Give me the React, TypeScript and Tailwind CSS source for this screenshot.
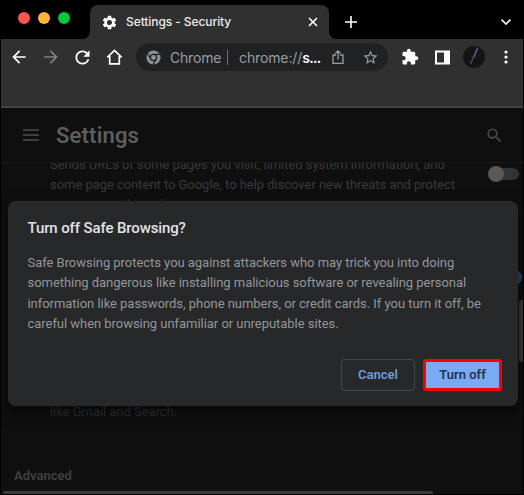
import type { ReactNode } from "react";
import { clsx } from "clsx";

const BODY_LINES = [
  "Safe Browsing protects you against attackers who may trick you into doing",
  "something dangerous like installing malicious software or revealing personal",
  "information like passwords, phone numbers, or credit cards. If you turn it off, be",
  "careful when browsing unfamiliar or unreputable sites.",
];

export default function App() {
  return (
    <div className="relative flex h-[495px] w-[524px] flex-col overflow-hidden bg-black px-px pb-px font-['Roboto',sans-serif]">
      <TabStrip />
      <Toolbar />
      <SettingsPage />
      <SafeBrowsingDialog />
    </div>
  );
}

function Icon({ d, className }: { d: string; className?: string }) {
  return (
    <svg viewBox="0 0 24 24" fill="currentColor" className={clsx("shrink-0", className)}>
      <path d={d} />
    </svg>
  );
}

function TabStrip() {
  return (
    <div className="flex h-[39px] shrink-0 items-end">
      <div className="flex h-full w-[82px] shrink-0 items-center gap-2 pl-[17px]">
        <span className="mb-[3px] h-3 w-3 rounded-full bg-[#ff5550]" />
        <span className="mb-[3px] h-3 w-3 rounded-full bg-[#ffb338]" />
        <span className="mb-[3px] h-3 w-3 rounded-full bg-[#00c838]" />
      </div>
      <TabFoot className="w-[7px]" d="M8 0v8H0a8 8 0 0 0 8-8z" />
      <div className="flex h-[34px] w-[239px] shrink-0 items-center rounded-t-[8px] bg-[#303030] pl-[11px] pr-[10px] text-white">
        <Icon
          className="h-[17px] w-[17px]"
          d="M19.14 12.94c.04-.3.06-.61.06-.94 0-.32-.02-.64-.07-.94l2.03-1.58a.49.49 0 0 0 .12-.61l-1.92-3.32a.49.49 0 0 0-.59-.22l-2.39.96c-.5-.38-1.03-.7-1.62-.94l-.36-2.54a.48.48 0 0 0-.48-.41h-3.84c-.24 0-.43.17-.47.41l-.36 2.54c-.59.24-1.13.57-1.62.94l-2.39-.96a.48.48 0 0 0-.59.22L2.74 8.87a.47.47 0 0 0 .12.61l2.03 1.58c-.05.3-.09.63-.09.94s.02.64.07.94l-2.03 1.58a.49.49 0 0 0-.12.61l1.92 3.32c.12.22.37.29.59.22l2.39-.96c.5.38 1.03.7 1.62.94l.36 2.54c.05.24.24.41.48.41h3.84c.24 0 .44-.17.47-.41l.36-2.54c.59-.24 1.13-.56 1.62-.94l2.39.96c.22.08.47 0 .59-.22l1.92-3.32a.47.47 0 0 0-.12-.61l-2.01-1.58zM12 15.6A3.61 3.61 0 0 1 8.400 12c0-1.980 1.620-3.600 3.600-3.600s3.600 1.620 3.600 3.600-1.620 3.600-3.600 3.600z"
        />
        <span className="ml-[8px] flex-1 whitespace-nowrap font-['Inter',sans-serif] text-[12px] font-medium tracking-[-0.08px] text-[#ececec]">
          Settings - Security
        </span>
        <Icon
          className="h-3 w-3"
          d="M21 5.200 18.800 3 12 9.800 5.200 3 3 5.200 9.800 12 3 18.800 5.200 21 12 14.200 18.800 21 21 18.800 14.200 12z"
        />
      </div>
      <TabFoot className="w-[7px]" d="M0 0v8h8a8 8 0 0 1-8-8z" />
      <div className="flex h-[34px] flex-1 items-center justify-between pl-[9px] pr-[12px] text-white">
        <svg viewBox="0 0 12 12" className="h-3 w-3" stroke="currentColor" strokeWidth="1.6">
          <path d="M6 0v12M0 6h12" />
        </svg>
        <svg viewBox="0 0 10 6" className="h-1.5 w-2.5" fill="none" stroke="currentColor" strokeWidth="1.6">
          <path d="m.6.6 4.400 4.400L9.400.6" />
        </svg>
      </div>
    </div>
  );
}

function TabFoot({ d, className }: { d: string; className: string }) {
  return (
    <svg viewBox="0 0 8 8" preserveAspectRatio="none" className={clsx("h-[8px] shrink-0", className)}>
      <path fill="#303030" d={d} />
    </svg>
  );
}

function Toolbar() {
  return (
    <div className="h-[69px] w-[522px] shrink-0 border-b-2 border-[#434343] bg-[#303030] pt-[4px]">
      <div className="flex h-7 items-center text-white">
        <Icon className="ml-[8px] h-[20px] w-[20px]" d="M20 11H7.830l5.590-5.590L12 4l-8 8 8 8 1.410-1.410L7.830 13H20v-2z" />
        <Icon
          className="ml-[12px] h-[20px] w-[20px] text-[#818181]"
          d="m12 4-1.410 1.410L16.170 11H4v2h12.170l-5.580 5.590L12 20l8-8z"
        />
        <Icon
          className="ml-[11px] h-[21px] w-[21px]"
          d="M17.650 6.350A7.960 7.960 0 0 0 12 4c-4.420 0-7.990 3.580-7.990 8s3.570 8 7.990 8c3.730 0 6.840-2.550 7.730-6h-2.080A5.990 5.990 0 0 1 12 18c-3.310 0-6-2.690-6-6s2.690-6 6-6c1.660 0 3.140.690 4.220 1.780L13 11h7V4l-2.350 2.350z"
        />
        <svg viewBox="0 0 16 16" className="ml-[13px] h-4 w-[17px] shrink-0" fill="none" stroke="currentColor" strokeWidth="1.700">
          <path d="M.8 8.300 8 1.500l7.200 6.800M3.200 7v7.800h9.600V7" />
        </svg>
        <AddressBar />
        <Icon
          className="ml-[13px] h-[18px] w-[18px]"
          d="M20.500 11H19V7c0-1.100-.9-2-2-2h-4V3.500a2.500 2.500 0 0 0-5 0V5H4c-1.100 0-1.990.9-1.990 2v3.800H3.500c1.490 0 2.700 1.210 2.700 2.700s-1.210 2.700-2.700 2.700H2V20c0 1.100.9 2 2 2h3.800v-1.500c0-1.490 1.210-2.700 2.700-2.700s2.700 1.210 2.700 2.700V22H17c1.100 0 2-.9 2-2v-4h1.500a2.500 2.500 0 0 0 0-5z"
        />
        <svg viewBox="0 0 15 15" className="ml-[16px] h-[15px] w-[15px] shrink-0">
          <path fill="currentColor" fillRule="evenodd" d="M0 .5h15v14H0zM2 2.500v10h7v-10z" />
        </svg>
        <svg viewBox="0 0 22 22" className="ml-[13px] h-[22px] w-[22px] shrink-0">
          <circle cx="11" cy="11" r="11" fill="#111516" />
          <path d="m7.500 18 4-9" stroke="#55545c" strokeWidth="1.200" />
          <path d="m11 11 3.500-9" stroke="#765080" strokeWidth="1.700" />
          <path d="m8 10 5 2" stroke="#34373a" />
        </svg>
        <svg viewBox="0 0 4 14" className="ml-[19px] h-[14px] w-1 shrink-0" fill="currentColor">
          <circle cx="2" cy="2" r="1.600" />
          <circle cx="2" cy="7" r="1.600" />
          <circle cx="2" cy="12" r="1.600" />
        </svg>
      </div>
    </div>
  );
}

function AddressBar() {
  return (
    <div className="ml-[13px] flex h-7 w-[252px] shrink-0 items-center rounded-full bg-[#1f2123] font-['Inter',sans-serif] text-[14px] text-[#9b9da0]">
      <svg viewBox="0 0 16 16" className="ml-[10px] h-[15px] w-[15px] shrink-0">
        <circle cx="8" cy="8" r="7.500" fill="#8d9298" />
        <circle cx="8" cy="8" r="3.300" fill="#8d9298" stroke="#1f2123" strokeWidth="1.300" />
        <path d="M8 4.700h6.800M5.100 9.700 1.700 3.800M10.900 9.700l-3.400 5.900" stroke="#1f2123" strokeWidth="1.200" />
      </svg>
      <span className="ml-[9px] w-[51px] shrink-0 tracking-[-0.200px]">Chrome</span>
      <span className="ml-[6px] h-[15px] w-px shrink-0 bg-[#727476]" />
      <span className="ml-[11px] w-[81px] shrink-0 whitespace-nowrap tracking-[-0.120px]">
        chrome://<span className="font-semibold tracking-[-0.700px] text-white">s...</span>
      </span>
      <svg viewBox="0 0 12 14" className="ml-[12px] h-[14px] w-3 shrink-0" fill="none" stroke="currentColor" strokeWidth="1.300">
        <path d="M4 5H1v8.400h10V5H8M6 9.500V1M3.300 3.500 6 .9l2.700 2.600" />
      </svg>
      <Icon
        className="ml-[18px] h-[17px] w-[17px]"
        d="m22 9.240-7.190-.620L12 2 9.190 8.630 2 9.240l5.460 4.730L5.820 21 12 17.270 18.180 21l-1.630-7.030L22 9.240zM12 15.400l-3.760 2.270 1-4.280-3.320-2.880 4.380-.380L12 6.100l1.710 4.040 4.380.380-3.320 2.880 1 4.280L12 15.400z"
      />
    </div>
  );
}

function SettingsPage() {
  return (
    <div className="flex min-h-0 flex-1 flex-col overflow-hidden bg-[#0f0f0f]">
      <div className="flex h-[55px] shrink-0 items-center border-b border-[#191919] pl-[22px] pr-[19px]">
        <div className="flex w-4 flex-col gap-[3px]">
          <Bar />
          <Bar />
          <Bar />
        </div>
        <h1 className="ml-[17px] flex-1 text-[22px] font-semibold tracking-[0.15px] text-[#5c5d5e]">Settings</h1>
        <Icon
          className="h-[19px] w-[19px] text-[#48494a]"
          d="M15.500 14h-.790l-.280-.270A6.471 6.471 0 0 0 16 9.500 6.500 6.500 0 1 0 9.500 16c1.610 0 3.090-.590 4.230-1.570l.270.280v.790l5 4.990L20.490 19l-4.990-5zm-6 0C7.010 14 5 11.990 5 9.500S7.010 5 9.500 5 14 7.010 14 9.500 11.990 14 9.500 14z"
        />
      </div>
      <div className="flex h-[206px] shrink-0 justify-between overflow-hidden pl-[49px] pr-[4px] text-[#38393a]">
        <div className="-mt-[8.500px]">
          <Line>Sends URLs of some pages you visit, limited system information, and</Line>
          <Line>some page content to Google, to help discover new threats and protect</Line>
          <Line>everyone on the web.</Line>
        </div>
        <div className="mt-[3px] flex h-4 w-[31px] items-center">
          <span className="z-10 h-4 w-4 rounded-full bg-[#59595a]" />
          <span className="-ml-2 h-3 w-[23px] rounded-full bg-[#303438]" />
        </div>
      </div>
      <div className="mt-[33px] shrink-0 pl-[49px] text-[#2e2f30]">
        <Line>like Gmail and Search.</Line>
      </div>
      <div className="flex flex-1 flex-col justify-end">
        <h2 className="mb-[5px] ml-[13px] text-[13px] font-semibold leading-5 text-[#3f4041]">Advanced</h2>
        <div className="ml-[2px] h-[3px] w-[430px] shrink-0 rounded-t-[2px] bg-[#3b3b3b]" />
      </div>
    </div>
  );
}

function Bar() {
  return <span className="h-[2px] w-4 bg-[#3e3f40]" />;
}

function Line({ children }: { children: ReactNode }) {
  return (
    <p className="h-[20.3px] whitespace-nowrap text-[13px] font-[450] leading-[20.3px] tracking-[-0.04px]">{children}</p>
  );
}

function SafeBrowsingDialog() {
  return (
    <>
      <span className="absolute right-[2px] top-[270px] h-[15px] w-[15px] rounded-full bg-[#2c3f64]" />
      <span className="absolute right-px top-[300px] h-[62px] w-1 rounded-l-[3px] bg-[#3b3b3b]" />
      <div className="absolute left-[8px] top-[201px] flex h-[205px] w-[510px] flex-col rounded-[8px] bg-[#272829] pl-[19.500px] pr-[16px] pt-[17px] shadow-[0_6px_16px_rgba(0,0,0,0.5)]">
        <h2 className="whitespace-nowrap text-[15px] font-medium leading-[20px] tracking-[-0.120px] text-[#e2e3e5]">
          Turn off Safe Browsing?
        </h2>
        <div className="mt-[15px] text-[#92969b]">
          {BODY_LINES.map((line) => (
            <Line key={line}>{line}</Line>
          ))}
        </div>
        <div className="mt-[24.500px] flex justify-end gap-2 text-[13px] font-semibold">
          <button type="button" className="h-8 w-[74px] rounded-[4px] border border-[#46484a] text-[#7199dd]">
            Cancel
          </button>
          <button type="button" className="h-8 w-[79px] rounded-[3px] border-[3px] border-[#fb0007] bg-[#7aa9f5] text-[#25344d]">
            Turn off
          </button>
        </div>
      </div>
    </>
  );
}
